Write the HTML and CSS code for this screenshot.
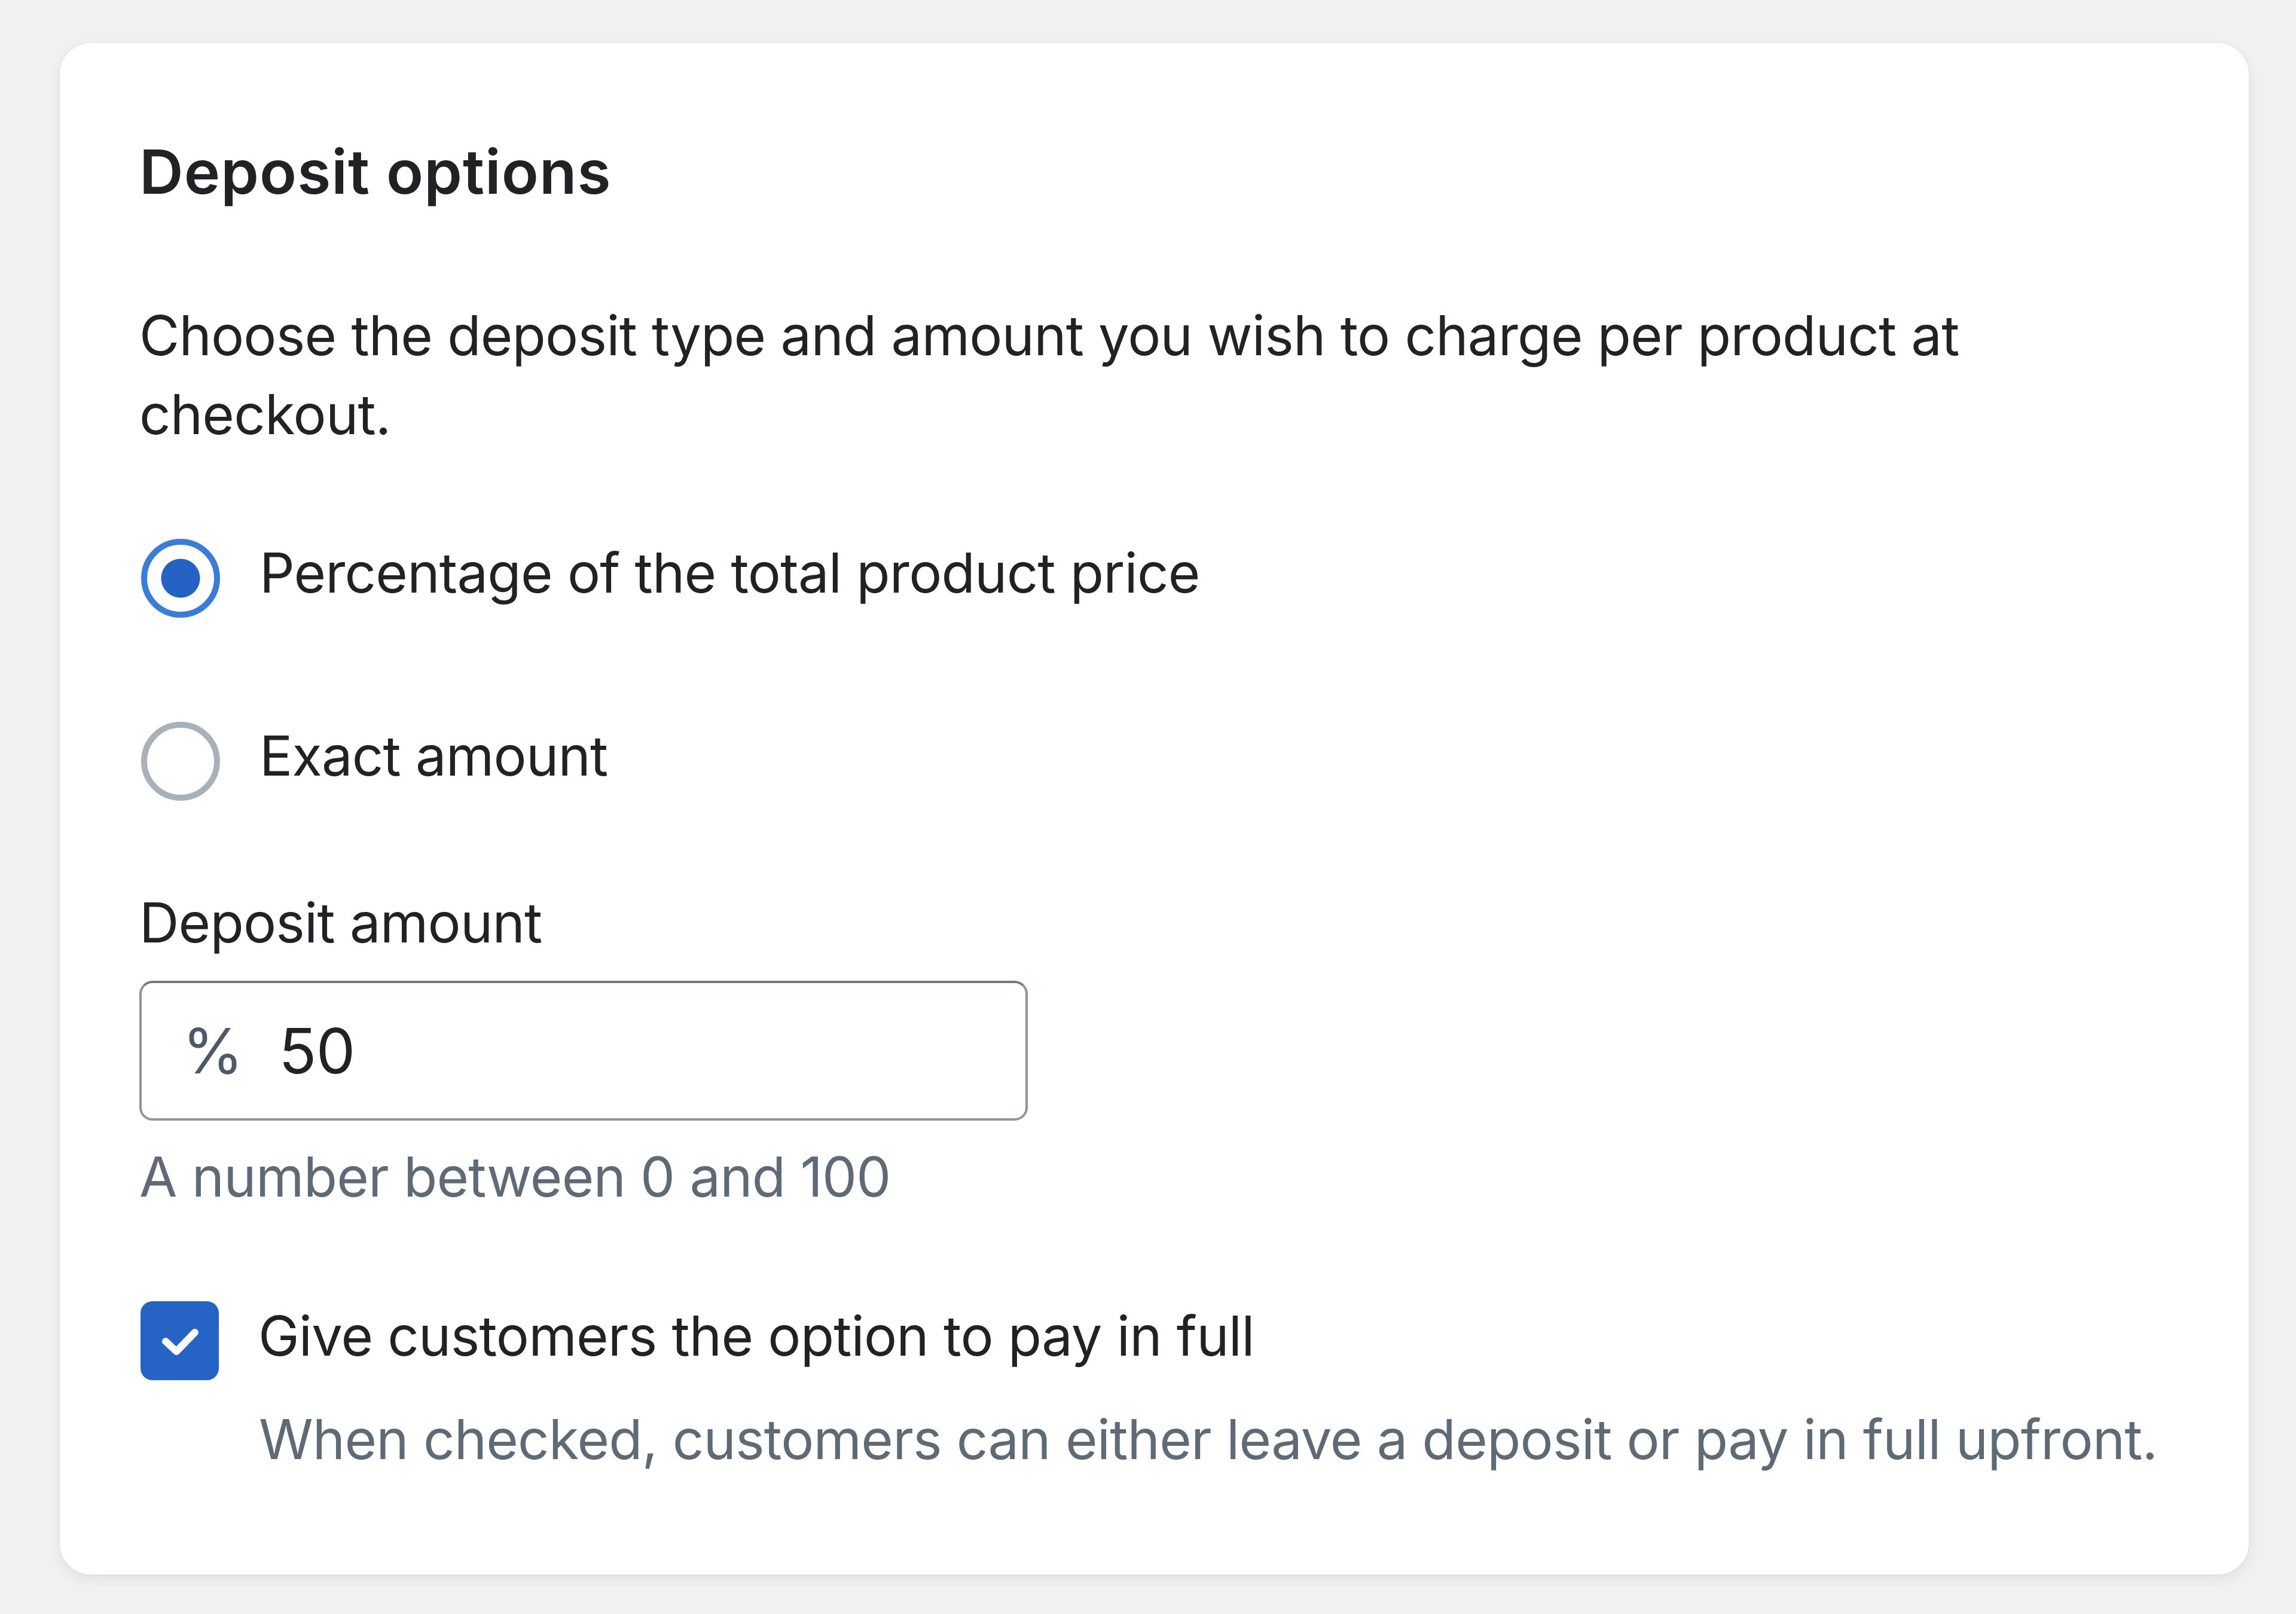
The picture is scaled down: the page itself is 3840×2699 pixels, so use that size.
FILE: index.html
```html
<!DOCTYPE html>
<html lang="en">
<head>
<meta charset="UTF-8">
<meta name="viewport" content="width=device-width, initial-scale=1.0">
<title>Deposit options</title>
<link rel="stylesheet" href="styles.css">
</head>
<body>
<div class="card">
    <h2 class="card-title">Deposit options</h2>
    <p class="card-text">Choose the deposit type and amount you wish to charge per product at checkout.</p>

    <div class="choice-list">
        <label class="choice choice-first">
            <input type="radio" name="depositType" value="percentage" checked>
            <span class="choice-label">Percentage of the total product price</span>
        </label>
        <label class="choice">
            <input type="radio" name="depositType" value="exact">
            <span class="choice-label">Exact amount</span>
        </label>
    </div>

    <div class="field">
        <label class="field-label" for="depositAmount">Deposit amount</label>
        <div class="input-wrap">
            <span class="input-prefix">%</span>
            <input id="depositAmount" class="input" type="text" value="50">
        </div>
        <div class="help-text">A number between 0 and 100</div>
    </div>

    <label class="choice choice-check">
        <span class="checkbox">
            <svg viewBox="0 0 130 130" width="130" height="130">
                <path d="M41 66 L59 83 L90 51" fill="none" stroke="#fff" stroke-width="12" stroke-linecap="round" stroke-linejoin="round"/>
            </svg>
        </span>
        <span class="choice-label">Give customers the option to pay in full</span>
    </label>
    <div class="help-text check-help">When checked, customers can either leave a deposit or pay in full upfront.</div>
</div>
</body>
</html>
```

FILE: styles.css
```css
/* Page */
body {
    margin: 0;
    padding: 72px 79px 67px 100px;
    background: #f0f1f3;
    font-family: Inter, 'Noto Sans', sans-serif;
    color: #202223;
    letter-spacing: -0.8px;
}
.card {
    background: #fff;
    border-radius: 52px;
    padding: 149px 120px 160px 133px;
    box-shadow: 0 0 0 2px rgba(0,0,0,0.02), 0 8px 22px rgba(0,0,0,0.07);
}
.card-title {
    margin: 0;
    font-size: 102px;
    line-height: 132px;
    font-weight: 600;
    letter-spacing: 1.1px;
}
.card-text {
    margin: 142px 0 0;
    font-size: 92px;
    line-height: 132px;
}

/* Radio and checkbox rows */
.choice-list {
    margin-top: 133px;
}
.choice {
    display: flex;
    align-items: flex-start;
    gap: 66px;
    font-size: 92px;
    line-height: 132px;
}
.choice + .choice {
    margin-top: 165px;
}
.choice input[type="radio"] {
    appearance: none;
    margin: 9px 0 0 3px;
    width: 132px;
    height: 132px;
    flex: none;
    border-radius: 50%;
    border: 10px solid #a8b0b9;
    background: #fff;
    box-sizing: border-box;
}
.choice input[type="radio"]:checked {
    border-color: #3a7dd9;
    background: radial-gradient(circle, #2463c4 0 32px, #fff 33px);
}
.checkbox {
    flex: none;
    width: 131px;
    height: 132px;
    margin: 8px 0 0 2px;
    border-radius: 20px;
    background: #2563c5;
    display: flex;
    align-items: center;
    justify-content: center;
}
.choice-check {
    margin-top: 134px;
}

/* Amount field */
.field {
    margin-top: 138px;
}
.field-label {
    display: block;
    font-size: 92px;
    line-height: 132px;
}
.input-wrap {
    margin-top: 31px;
    width: 1486px;
    height: 234px;
    box-sizing: border-box;
    border: 4px solid #8c969f;
    border-top-color: #6f7a84;
    border-radius: 22px;
    display: flex;
    align-items: center;
    padding-left: 68px;
}
.input-prefix {
    font-size: 104px;
    color: #4d5966;
    margin-right: 60px;
}
.input {
    border: none;
    outline: none;
    padding: 0;
    flex: 1;
    min-width: 0;
    font-family: inherit;
    font-size: 104px;
    letter-spacing: -0.8px;
    color: #202223;
    background: transparent;
}
.help-text {
    margin-top: 28px;
    font-size: 92px;
    line-height: 132px;
    color: #5e6a76;
}
.check-help {
    margin: 33px 0 0 200px;
}
```
